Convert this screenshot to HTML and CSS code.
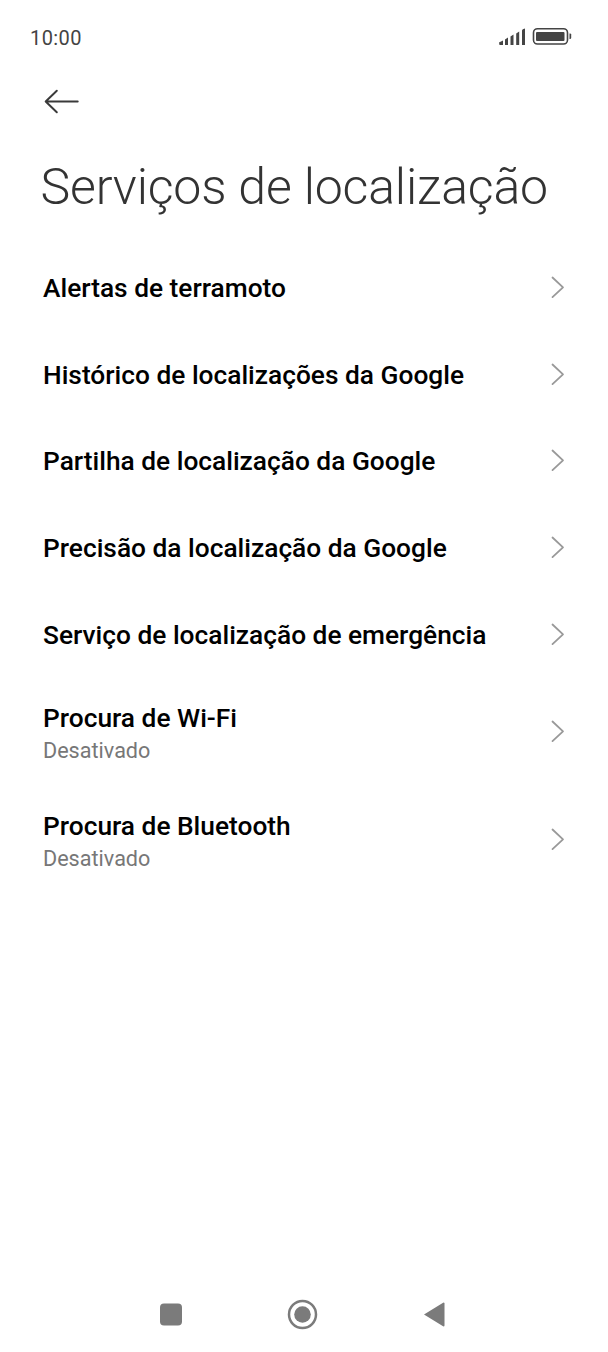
FILE: index.html
```html
<!DOCTYPE html>
<html lang="pt">
<head>
<meta charset="utf-8">
<title>Serviços de localização</title>
<link rel="stylesheet" href="styles.css">
</head>
<body>
<main class="screen">
<header class="status"><span class="clock">10:00</span>
<svg class="status-icons" width="74" height="20" viewBox="499 27 74 20"><g fill="#444"><path d="M499 42.500 503 40.500V45H499.500zM505 39.500 508 37.500V45H505zM510.500 36.500 513.500 34.500V45H510.500zM516.200 33.500 519.200 31.500V45H516.200zM522 30.500Q522 29 525 28.500V45H522z"/><rect x="536" y="32" width="28.500" height="9" rx="1"/><path d="M569.500 33.500h1l.7 1v3.500l-.7 1h-1z"/></g><rect x="533.500" y="28.700" width="34" height="15.300" rx="4" fill="none" stroke="#444" stroke-width="1.600"/></svg></header>
<svg class="back" width="36" height="26" viewBox="44 89 36 26"><path d="M77.700 101.500H46M56.800 90.800 45.700 101.500 56.800 112.200" fill="none" stroke="#3a3a3a" stroke-width="2" stroke-linecap="round" stroke-linejoin="round"/></svg>
<h1 class="title">Serviços de localização</h1>
<ul class="list">
<li class="row"><span class="label">Alertas de terramoto</span><svg class="chevron" viewBox="0 0 14 24"><path d="M1.500 1.500 12 11.300 1.500 21.100"/></svg></li>
<li class="row"><span class="label">Histórico de localizações da Google</span><svg class="chevron" viewBox="0 0 14 24"><path d="M1.500 1.500 12 11.300 1.500 21.100"/></svg></li>
<li class="row"><span class="label">Partilha de localização da Google</span><svg class="chevron" viewBox="0 0 14 24"><path d="M1.500 1.500 12 11.300 1.500 21.100"/></svg></li>
<li class="row"><span class="label">Precisão da localização da Google</span><svg class="chevron" viewBox="0 0 14 24"><path d="M1.500 1.500 12 11.300 1.500 21.100"/></svg></li>
<li class="row"><span class="label">Serviço de localização de emergência</span><svg class="chevron" viewBox="0 0 14 24"><path d="M1.500 1.500 12 11.300 1.500 21.100"/></svg></li>
<li class="row tall"><div class="text"><span class="label">Procura de Wi-Fi</span><span class="sub">Desativado</span></div><svg class="chevron" viewBox="0 0 14 24"><path d="M1.500 1.500 12 11.300 1.500 21.100"/></svg></li>
<li class="row tall"><div class="text"><span class="label">Procura de Bluetooth</span><span class="sub">Desativado</span></div><svg class="chevron" viewBox="0 0 14 24"><path d="M1.500 1.500 12 11.300 1.500 21.100"/></svg></li>
</ul>
<nav class="nav"><svg width="286" height="32" viewBox="160 1299 286 32"><g fill="#7b7b7b"><rect x="160" y="1303.500" width="22" height="22" rx="4"/><circle cx="302.500" cy="1314.500" r="8.300"/><path d="M424 1314.500 443.500 1302.500q1 0 1 1V1325.500q0 1-1 1z"/></g><circle cx="302.500" cy="1314.500" r="13.500" fill="none" stroke="#7b7b7b" stroke-width="2.500"/></svg></nav>
</main>
</body>
</html>
```
FILE: styles.css
```css
* { box-sizing: border-box; }
body { margin: 0; background: #fff; font-family: Roboto, sans-serif; }
.screen { width: 608px; height: 1352px; display: flex; flex-direction: column; }
.status { height: 89px; padding: 27px 35px 0 30px; display: flex; justify-content: space-between; align-items: flex-start; }
.clock { font-size: 20px; line-height: 22px; font-weight: 450; color: #444; letter-spacing: 0.4px; }
.back { margin-left: 44px; }
.title { margin: 42px 0 0 40.500px; font-size: 50px; line-height: 60px; font-weight: 300; color: #333; letter-spacing: -0.170px; white-space: nowrap; }
.list { list-style: none; margin: 28px 0 0; padding: 0 43px; }
.row { height: 86.600px; display: flex; align-items: center; justify-content: space-between; }
.tall { height: 108.300px; }
.text { padding-top: 4px; }
.label { display: block; font-size: 26.300px; line-height: 32px; font-weight: 500; color: #000; white-space: nowrap; }
.sub { display: block; font-size: 21.600px; line-height: 33px; color: #777; }
.chevron { width: 14px; height: 24px; fill: none; stroke: #999; stroke-width: 1.800; stroke-linecap: round; stroke-linejoin: round; }
.nav { margin-top: auto; height: 53px; padding-left: 160px; }
```
